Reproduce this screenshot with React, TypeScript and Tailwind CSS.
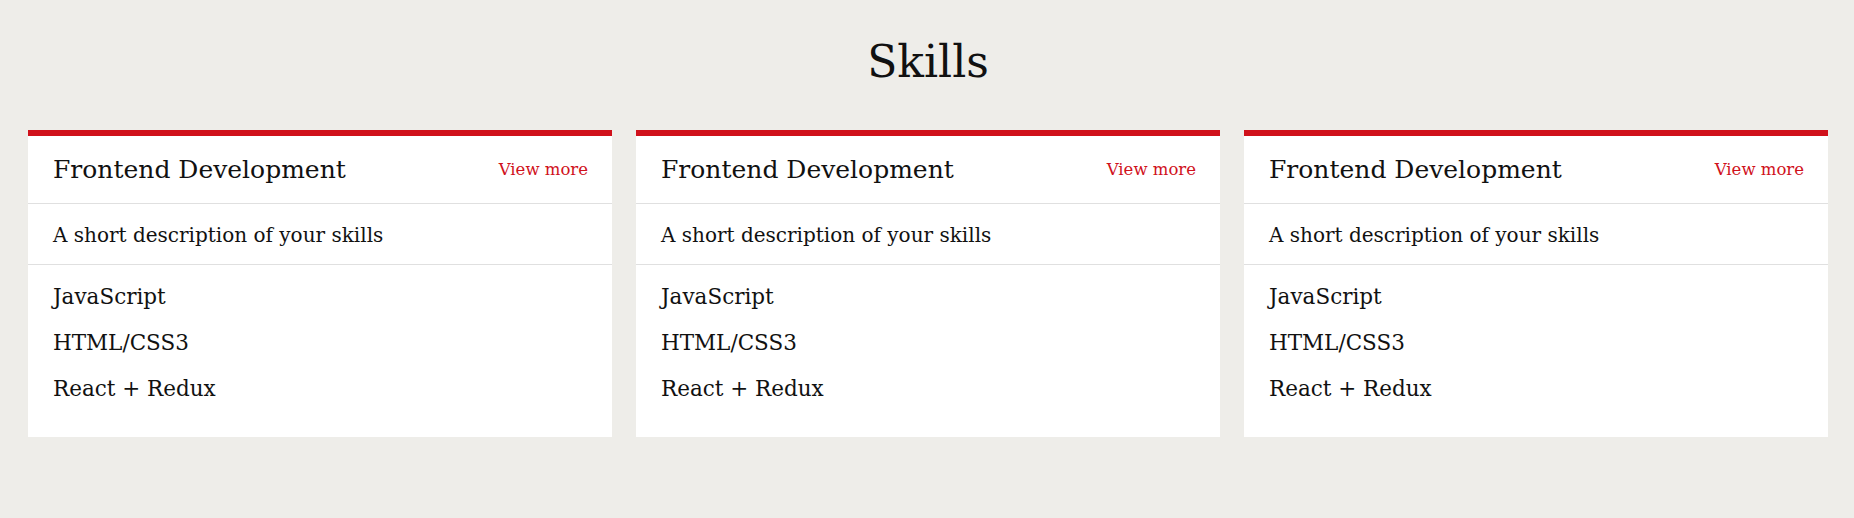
import React from 'react';

interface Skill {
  title: string;
  description: string;
  items: string[];
}

const skills: Skill[] = [
  { title: 'Frontend Development', description: 'A short description of your skills', items: ['JavaScript', 'HTML/CSS3', 'React + Redux'] },
  { title: 'Frontend Development', description: 'A short description of your skills', items: ['JavaScript', 'HTML/CSS3', 'React + Redux'] },
  { title: 'Frontend Development', description: 'A short description of your skills', items: ['JavaScript', 'HTML/CSS3', 'React + Redux'] },
];

function SkillCard({ skill }: { skill: Skill }) {
  return (
    <div className="bg-white border-t-[6px] border-[#d0111b]">
      {/* Header */}
      <div className="flex items-center justify-between pl-[25px] pr-6 pt-4 pb-[15px] border-b border-[#e0e0e0]">
        <h3 className="text-[25px] leading-[36px] text-[#111111]">{skill.title}</h3>
        <a href="#" className="text-[16.5px] leading-[36px] text-[#d0111b] no-underline">
          View more
        </a>
      </div>

      {/* Description */}
      <p className="px-[25px] pt-4 pb-[14px] text-[20px] leading-[30px] text-[#111111] border-b border-[#e0e0e0]">
        {skill.description}
      </p>

      {/* Items */}
      <ul className="px-[25px] pt-[9px] pb-[25px]">
        {skill.items.map((item) => (
          <li key={item} className="text-[21.5px] leading-[46px] text-[#111111]">
            {item}
          </li>
        ))}
      </ul>
    </div>
  );
}

export default function App() {
  return (
    <div className="min-h-screen bg-[#eeede9] pt-10 pl-[28px] pr-[26px] font-['DejaVu_Serif',serif]">
      <h2 className="text-center text-[44px] leading-[44px] text-[#111111] mb-[46px]">Skills</h2>
      <div className="grid grid-cols-3 gap-6">
        {skills.map((skill, i) => (
          <SkillCard key={i} skill={skill} />
        ))}
      </div>
    </div>
  );
}
